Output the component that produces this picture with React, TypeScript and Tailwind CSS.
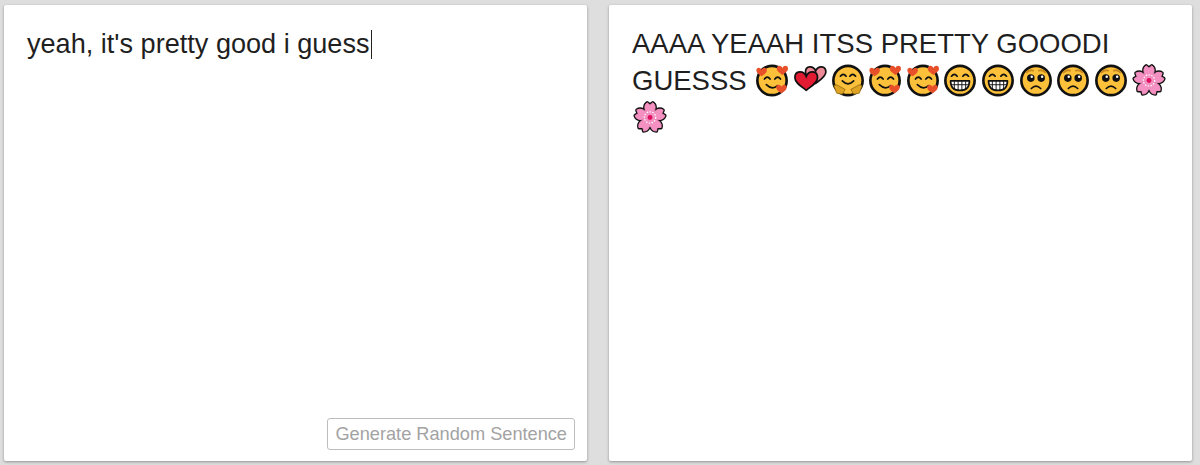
const HEART = "M0 2C-2-3-9-3-9 3c0 4 5 7 9 10 4-3 9-6 9-10C9-3 2-3 0 2z";

const Emoji = ({ children }: { children: React.ReactNode }) => (
  <svg
    viewBox="0 0 36 36"
    className="inline-block w-[34px] h-[34px] ml-[1px] -mr-[5px] align-[-7px]"
    aria-hidden="true"
  >
    {children}
  </svg>
);

const Heart = ({ x, y, s, fill }: { x: number; y: number; s: number; fill: string }) => (
  <path transform={`translate(${x} ${y}) scale(${s})`} d={HEART} fill={fill} />
);

const Face = () => <circle cx="18" cy="18.500" r="15.500" fill="#fcc03a" stroke="#111" strokeWidth="2.800" />;

const SmilingHearts = () => (
  <Emoji>
    <Face />
    <path d="M10 17q3-4 6 0M21 17q3-4 6 0M12 23q6 6 12 1" fill="none" stroke="#111" strokeWidth="1.800" strokeLinecap="round" />
    <Heart x={7} y={6} s={0.62} fill="#e8502a" />
    <Heart x={29} y={4} s={0.66} fill="#e8502a" />
    <Heart x={28} y={24} s={0.62} fill="#e8502a" />
  </Emoji>
);

const TwoHearts = () => (
  <Emoji>
    <g transform="translate(24 6) scale(1.2)">
      <path d={HEART} fill="#ee8a98" stroke="#111" strokeWidth="1.500" />
    </g>
    <g transform="translate(14 11.500) scale(1.33)">
      <path d={HEART} fill="#e21b32" stroke="#111" strokeWidth="1.400" />
    </g>
  </Emoji>
);

const Hugging = () => (
  <Emoji>
    <Face />
    <path d="M10 14q3-4 6 0M20 14q3-4 6 0M12 19q6 6 12 0" fill="none" stroke="#111" strokeWidth="1.800" strokeLinecap="round" />
    <path d="M3 24l3-1 9 5-3 5-6-1zM33 24l-3-1-9 5 3 5 6-1z" fill="#dfa324" stroke="#8a6410" strokeWidth="0.800" strokeLinejoin="round" />
  </Emoji>
);

const Grin = () => (
  <Emoji>
    <Face />
    <path d="M9 14q3-4 6 0M21 14q3-4 6 0" fill="none" stroke="#111" strokeWidth="1.800" strokeLinecap="round" />
    <path d="M8 19h20q0 10-10 10T8 19z" fill="#fff" stroke="#111" strokeWidth="1.800" strokeLinejoin="round" />
    <path d="M8.500 23h19M12 19v9M16 19v10M20 19v10M24 19v9" stroke="#111" strokeWidth="1" />
  </Emoji>
);

const Pleading = () => (
  <Emoji>
    <Face />
    <path d="M8 10q3-3 7-2M21 8q4-1 7 2" fill="none" stroke="#c98a1e" strokeWidth="2" strokeLinecap="round" />
    <circle cx="12.500" cy="16" r="4" fill="#111" />
    <circle cx="23.500" cy="16" r="4" fill="#111" />
    <circle cx="13.500" cy="14.500" r="1.300" fill="#fff" />
    <circle cx="24.500" cy="14.500" r="1.300" fill="#fff" />
    <path d="M13 27q5-5 10 0" fill="none" stroke="#111" strokeWidth="1.800" strokeLinecap="round" />
  </Emoji>
);

// petals are drawn twice, outline first and fill on top, so they merge into one shape
const PETAL = "M18 18C12 12 11 6 15 3l3 2.500 3-2.500c4 3 3 9-3 15z";
const ANGLES = [0, 72, 144, 216, 288];

const Blossom = () => (
  <Emoji>
    {ANGLES.map((a) => (
      <path key={a} d={PETAL} transform={`rotate(${a} 18 18.500)`} fill="#111" stroke="#111" strokeWidth="3.800" strokeLinejoin="round" />
    ))}
    {ANGLES.map((a) => (
      <path key={a} d={PETAL} transform={`rotate(${a} 18 18.500)`} fill="#f491c2" stroke="#f491c2" strokeWidth="1" strokeLinejoin="round" />
    ))}
    <circle cx="18" cy="18.500" r="6" fill="none" stroke="#fff" strokeWidth="1.300" strokeDasharray="1.500 1.500" />
    <circle cx="18" cy="18.500" r="2.600" fill="#e0115f" />
  </Emoji>
);

export default function App() {
  return (
    <div className="flex gap-[22px] h-[465px] bg-[#dedede] pt-[5px] pb-[4px] pl-[4px] pr-[8px] font-['Liberation_Sans',Arial,sans-serif] leading-[37px] text-[#1f1f1f] overflow-hidden">
      <section className="flex flex-col flex-none w-[583px] bg-white rounded-[2px] shadow-[0_1px_3px_rgba(0,0,0,0.35)] pl-[23px] pr-[12px] pt-[20px] pb-[11px]">
        <p className="text-[27.1px]">
          yeah, it's pretty good i guess
          <span className="inline-block w-px h-[29px] ml-px align-[-6px] bg-[#212121]" />
        </p>
        <button className="mt-auto self-end h-[32px] px-[7px] border border-[#bdbdbd] rounded-[3px] text-[18.200px] leading-[30px] text-[#a3a3a3]">
          Generate Random Sentence
        </button>
      </section>
      <section className="flex-none w-[583px] bg-white rounded-[2px] shadow-[0_1px_3px_rgba(0,0,0,0.35)] pl-[23px] pr-[20px] pt-[20px]">
        <p className="text-[27.5px]">
          AAAA YEAAH ITSS PRETTY GOOODI GUESSS <SmilingHearts /> <TwoHearts /> <Hugging />{" "}
          <SmilingHearts /> <SmilingHearts /> <Grin /> <Grin /> <Pleading /> <Pleading />{" "}
          <Pleading /> <Blossom /> <Blossom />
        </p>
      </section>
    </div>
  );
}
